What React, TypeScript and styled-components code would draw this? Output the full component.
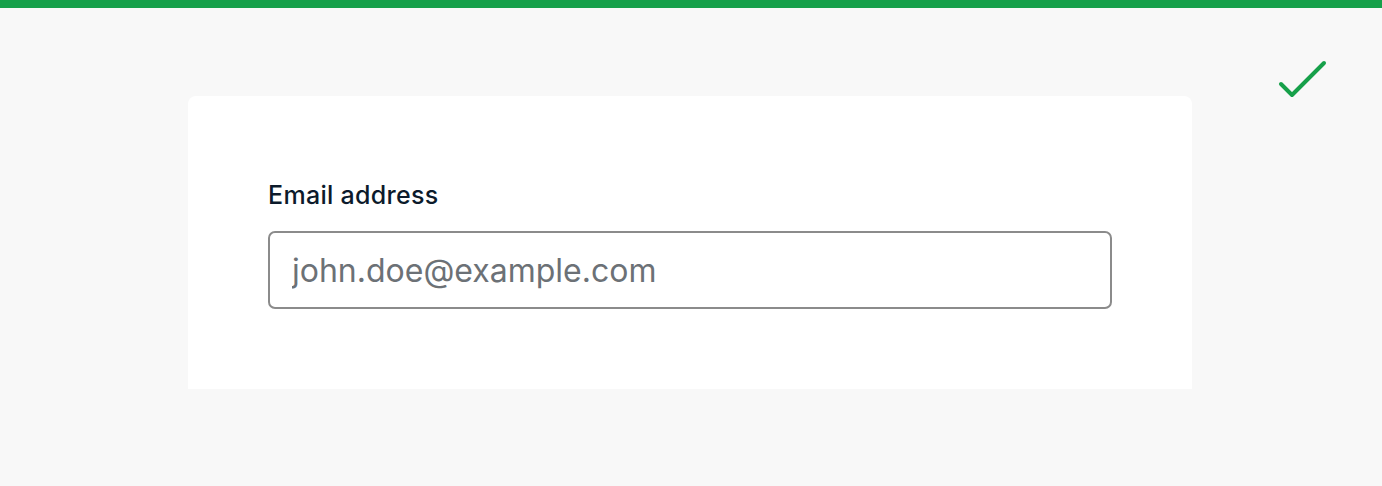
import React from "react";
import styled, { createGlobalStyle } from "styled-components";

const Global = createGlobalStyle`
  html, body { margin: 0; padding: 0; background: #f8f8f8; }
  body { font-family: Inter, "Noto Sans", sans-serif; }
`;

const Page = styled.div`
  position: relative;
  min-height: 486px;
  background: #f8f8f8;
  border-top: 8px solid #16a04a;
  box-sizing: border-box;
  padding-top: 88px;
`;

const Check = styled.svg`
  position: absolute;
  top: 50px;
  right: 54px;
  width: 50px;
  height: 44px;
`;

const Card = styled.div`
  width: 1004px;
  margin: 0 0 0 calc(50% - 503px);
  background: #ffffff;
  border-radius: 8px 8px 0 0;
  padding: 83px 80px 80px 80px;
  box-sizing: border-box;
  display: flex;
  flex-direction: column;
  gap: 20px;
`;

const Label = styled.label`
  font-size: 25px;
  font-weight: 500;
  letter-spacing: 0.3px;
  color: #0c1a2b;
  line-height: 32px;
`;

const Input = styled.input`
  height: 78px;
  box-sizing: border-box;
  border: 2px solid #8b8b8b;
  border-radius: 7px;
  padding: 0 22px;
  font-family: Inter, "Noto Sans", sans-serif;
  font-size: 32px;
  color: #1a1a1a;
  background: #fff;
  outline: none;
  &::placeholder { color: #6c7176; }
`;

export default function App() {
  return (
    <>
      <Global />
      <Page>
        <Check viewBox="0 0 50 44" fill="none">
          <path d="M3 26 L14 37 L46 5" stroke="#16a04a" strokeWidth="4" strokeLinecap="round" strokeLinejoin="round" />
        </Check>
        <Card>
          <Label htmlFor="email">Email address</Label>
          <Input id="email" type="email" placeholder="john.doe@example.com" />
        </Card>
      </Page>
    </>
  );
}
